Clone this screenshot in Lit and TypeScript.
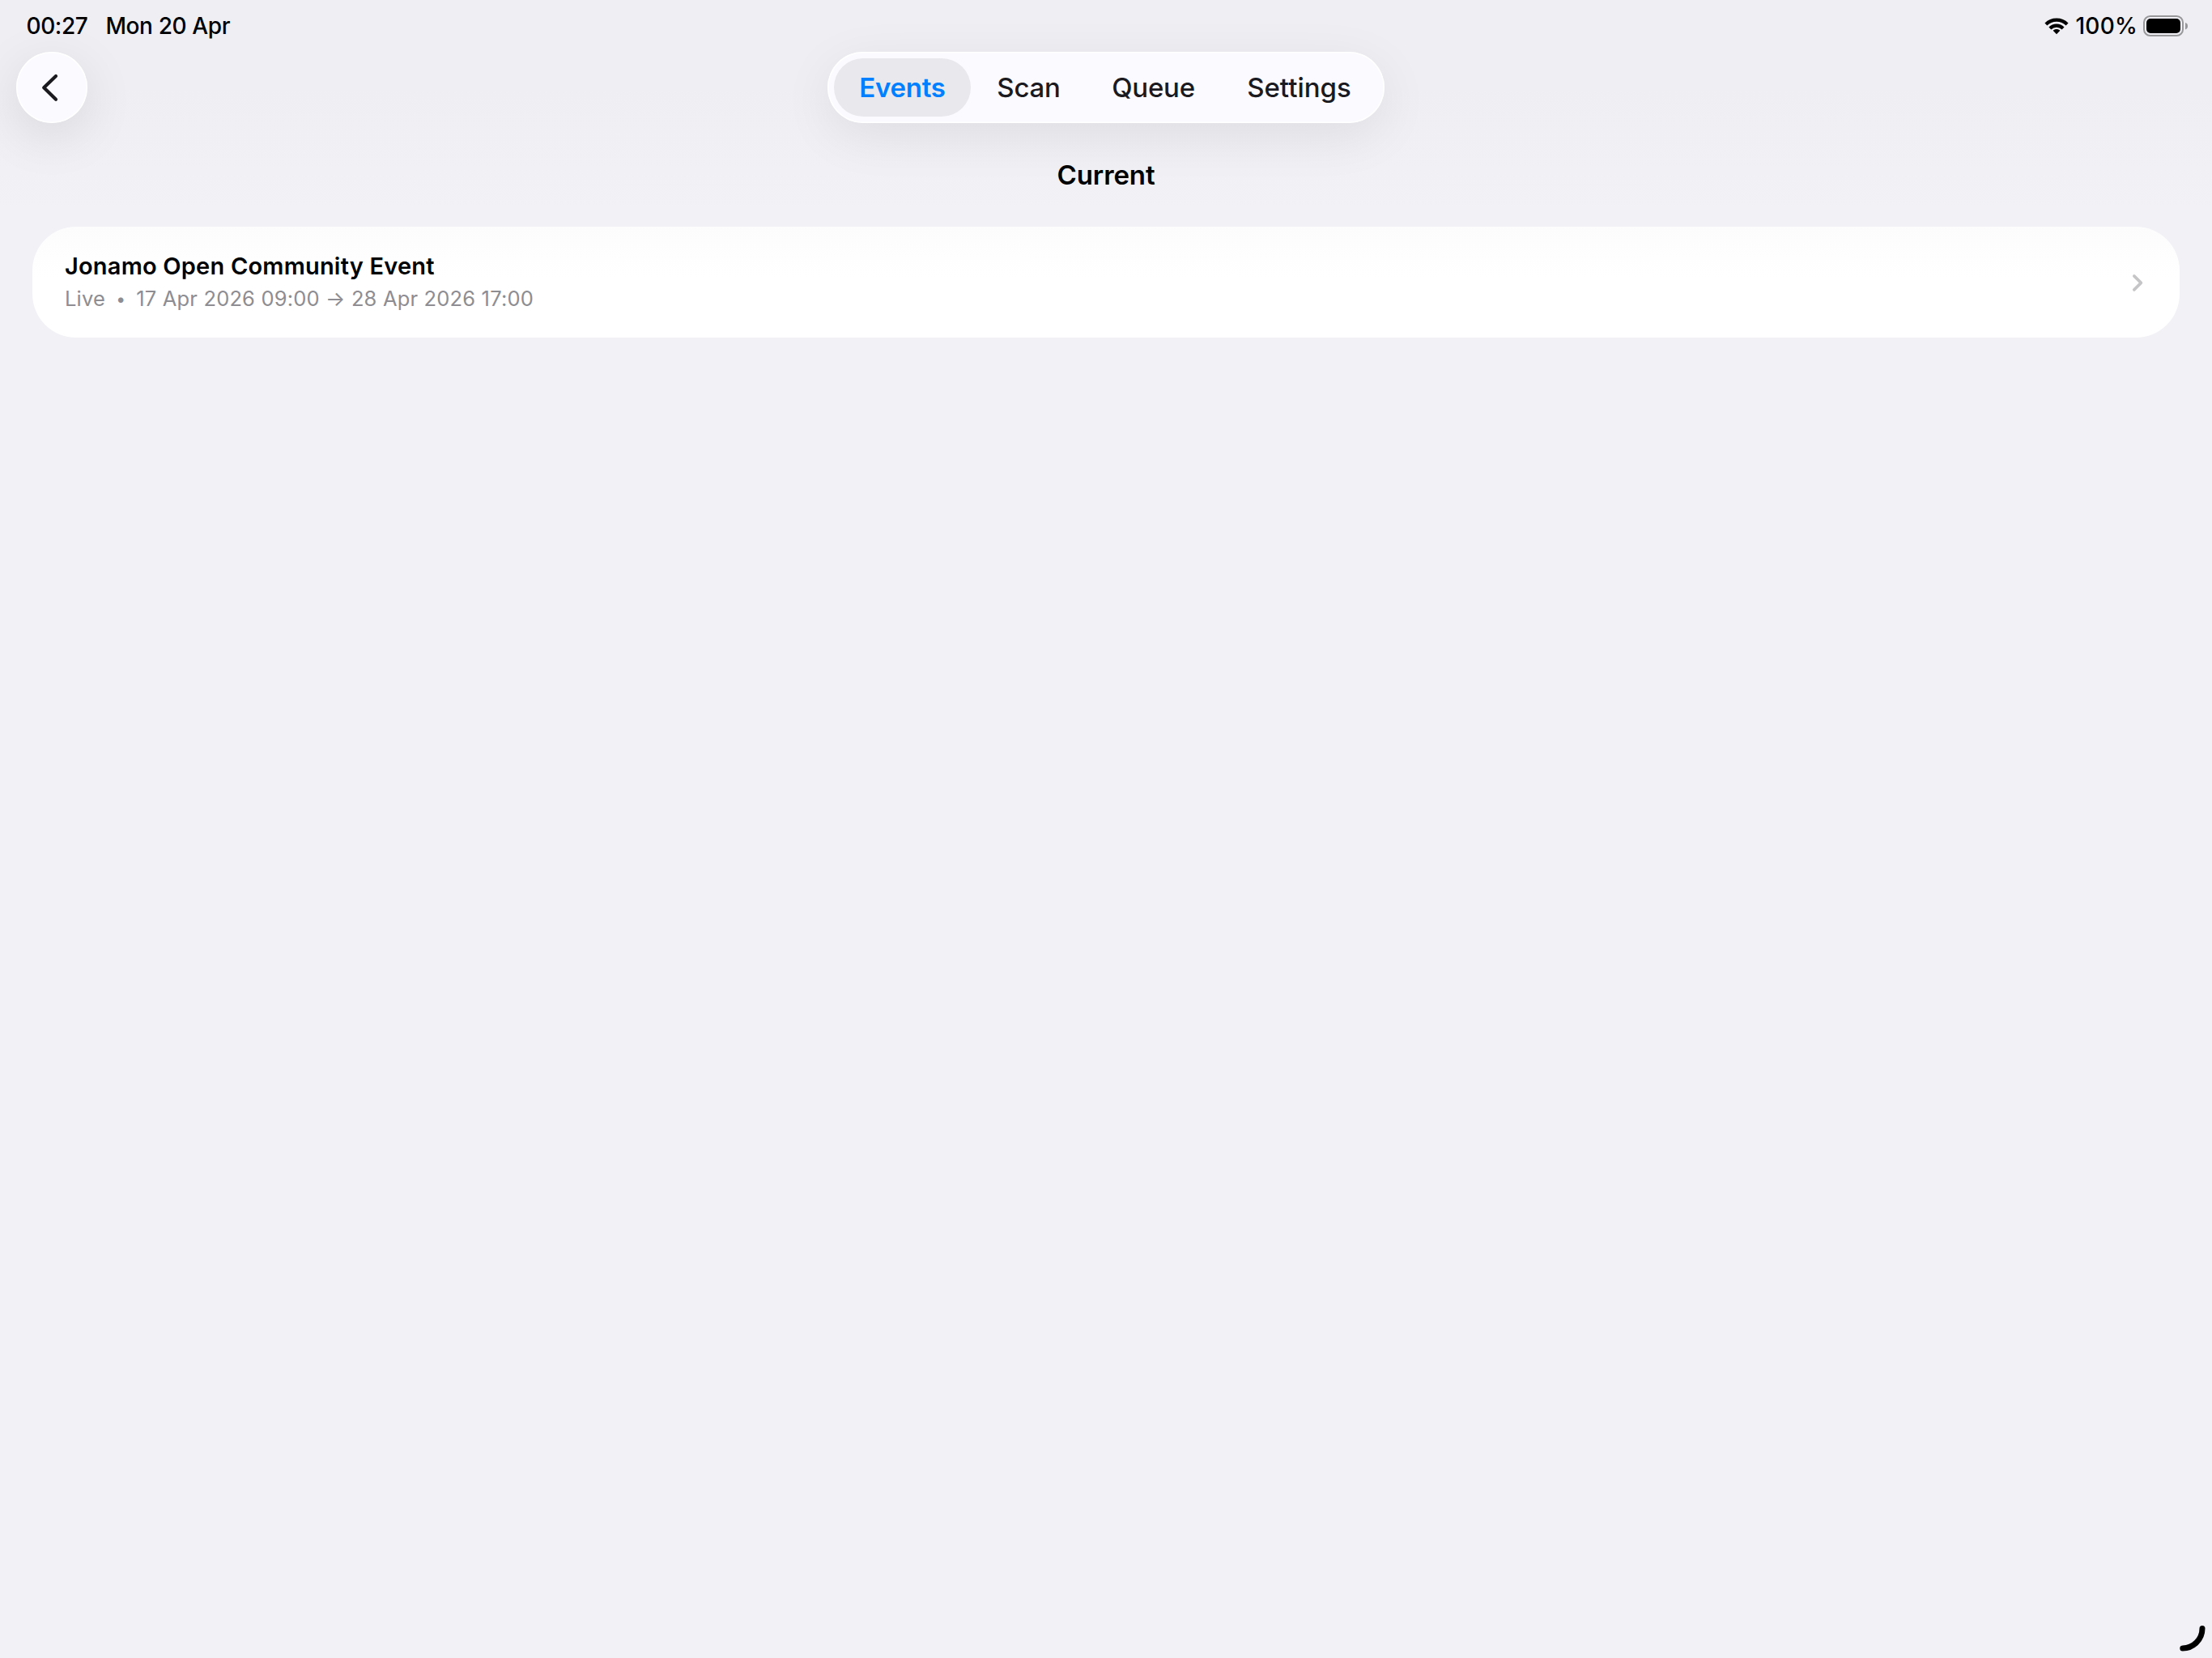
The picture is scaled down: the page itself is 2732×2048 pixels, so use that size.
import { LitElement, html, css, svg } from "lit";
import { customElement, property, state } from "lit/decorators.js";
import { classMap } from "lit/directives/class-map.js";

const chevron = (d: string) => svg`<path d=${d} fill="none" stroke-linecap="round" stroke-linejoin="round" />`;

@customElement("status-bar")
class StatusBar extends LitElement {
  static styles = css`
    :host {
      display: flex;
      justify-content: space-between;
      height: 64px;
      padding: 0 30px 0 32.5px;
      box-sizing: border-box;
      font-weight: 500;
      font-size: 28px;
      line-height: 64px;
      color: #000;
    }
    .side { display: flex; align-items: center; }
    .time { letter-spacing: -0.4px; margin-right: 22px; }
    .date { letter-spacing: -0.38px; }
    .level { letter-spacing: 0.24px; margin: 0 6px 0 8px; }
    svg { display: block; }
  `;
  render() {
    return html`
      <div class="side"><span class="time">00:27</span><span class="date">Mon 20 Apr</span></div>
      <div class="side">
        <svg width="30" height="64" viewBox="0 0 30 64" fill="none" stroke="#000" stroke-width="4.2">
          <path d="M1.9 29.9A18.7 18.7 0 0 1 28.1 29.9" />
          <path d="M6.9 34.9A11.6 11.6 0 0 1 23.1 34.9" />
          <path d="M15 42.2L10.9 38.1Q10.6 37.7 11.2 37.3Q15 34.7 18.8 37.3Q19.4 37.7 19.1 38.1Z" fill="#000" stroke="none" />
        </svg>
        <span class="level">100%</span>
        <svg width="56" height="64" viewBox="0 0 56 64">
          <rect x="2" y="20" width="48" height="24" rx="7.6" fill="none" stroke="#98989b" stroke-width="2" />
          <rect x="5" y="23" width="42" height="18" rx="5" fill="#000" />
          <path d="M53 28C55.3 28.6 56 30.2 56 32.2S55.3 35.8 53 36.4Z" fill="#98989b" />
        </svg>
      </div>`;
  }
}

@customElement("tab-bar")
class TabBar extends LitElement {
  @property({ type: Array }) tabs: string[] = [];
  @state() private active = 0;
  static styles = css`
    :host { display: block; }
    .pill {
      display: grid;
      grid-template-columns: 169px 143px 165px 195px;
      height: 88px;
      padding: 8px;
      box-sizing: border-box;
      border-radius: 44px;
      background: #fafaff;
      box-shadow: inset 0 0 0 1.5px #fff, 0 16px 64px rgba(0, 0, 0, 0.075);
    }
    button {
      border: 0;
      padding: 0;
      background: none;
      border-radius: 36px;
      font: 500 33px/72px Inter, "Liberation Sans", sans-serif;
      letter-spacing: -0.24px;
      color: #1a1a1f;
    }
    button:last-child { letter-spacing: 0; }
    .active { background: #e8e8ed; color: #0080ff; font-weight: 600; }
  `;
  render() {
    return html`<nav class="pill">
      ${this.tabs.map((t, i) => html`<button
        class=${classMap({ active: i === this.active })}
        @click=${() => (this.active = i)}
      >${t}</button>`)}
    </nav>`;
  }
}

@customElement("event-card")
class EventCard extends LitElement {
  @property() name = "";
  @property() status = "";
  @property() dates = "";
  static styles = css`
    :host {
      display: flex;
      justify-content: space-between;
      align-items: center;
      height: 137px;
      padding: 0 42px 0 40px;
      box-sizing: border-box;
      border-radius: 54px;
      background: linear-gradient(#fcfcfd, #fff 60px);
    }
    .title { font-weight: 600; font-size: 29px; line-height: 40px; letter-spacing: 0.2px; color: #000; }
    .meta { display: flex; gap: 12px; font-size: 25.5px; line-height: 40px; letter-spacing: 0.17px; color: #8d8d92; }
    .dot { width: 14.3px; text-align: center; font-size: 21px; line-height: 41px; height: 40px; }
    svg { stroke: #c5c5c7; stroke-width: 3.6; display: block; }
  `;
  render() {
    return html`
      <div>
        <div class="title">${this.name}</div>
        <div class="meta"><span>${this.status}</span><span class="dot">•</span><span>${this.dates}</span></div>
      </div>
      <svg width="20" height="28" viewBox="0 0 20 28">${chevron("M5.8 5.9L14.4 14.4L5.8 22.9")}</svg>`;
  }
}

@customElement("app-root")
class AppRoot extends LitElement {
  static styles = css`
    :host {
      display: flex;
      flex-direction: column;
      position: relative;
      height: 100vh;
      overflow: hidden;
      background: linear-gradient(#eeeef3 0, #eeeef3 110px, #f1f1f6 260px);
      font-family: Inter, "Liberation Sans", sans-serif;
    }
    .bar {
      display: grid;
      grid-template-columns: 1fr auto 1fr;
      padding: 0 20px;
      height: 88px;
    }
    .back {
      width: 88px;
      height: 88px;
      padding: 0;
      border: 0;
      border-radius: 50%;
      background: #fafaff;
      box-shadow: inset 0 0 0 1.5px #fff, 0 16px 64px rgba(0, 0, 0, 0.1);
      stroke: #1a1a1f;
      stroke-width: 4.2;
    }
    .back svg { display: block; }
    h1 { margin: 0; text-align: center; font-weight: 600; font-size: 33px; line-height: 128px; letter-spacing: -0.1px; color: #000; }
    event-card { margin: 0 40px; }
    .resize { position: absolute; right: 0; bottom: 0; }
  `;
  render() {
    return html`
      <status-bar></status-bar>
      <div class="bar">
        <button class="back" aria-label="Back">
          <svg width="88" height="88" viewBox="0 0 88 88">${chevron("M49 30L34.2 44.3L49 58.7")}</svg>
        </button>
        <tab-bar .tabs=${["Events", "Scan", "Queue", "Settings"]}></tab-bar>
      </div>
      <h1>Current</h1>
      <event-card
        name="Jonamo Open Community Event"
        status="Live"
        dates="17 Apr 2026 09:00 → 28 Apr 2026 17:00"
      ></event-card>
      <svg class="resize" width="72" height="72" viewBox="0 0 72 72">
        <path d="M60 35.5C60 49 49 60 35.8 60" fill="none" stroke="#000" stroke-width="7" stroke-linecap="round" />
      </svg>`;
  }
}
